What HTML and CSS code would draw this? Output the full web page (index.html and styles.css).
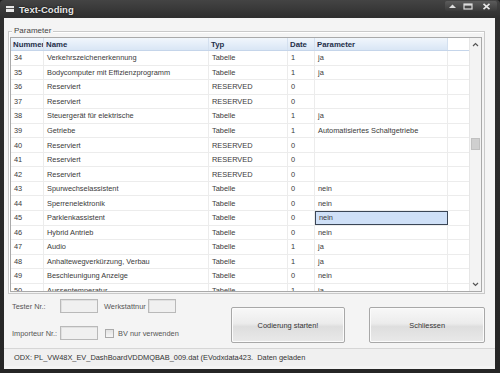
FILE: index.html
```html
<!DOCTYPE html>
<html>
<head>
<meta charset="utf-8">
<link rel="stylesheet" href="styles.css">
</head>
<body>
<div class="window">
  <div class="titlebar">
    <span class="appicon"></span>
    <span class="title">Text-Coding</span>
    <div class="controls">
      <span class="ctl min"><svg width="9" height="6" viewBox="0 0 9 6"><path d="M1 5 L4.5 1.5 L8 5 Z" fill="#ddd"/></svg></span>
      <span class="ctl max"><svg width="10" height="7" viewBox="0 0 10 7"><rect x="1" y="1" width="8" height="5" fill="none" stroke="#ddd" stroke-width="1.2"/><rect x="1" y="1" width="8" height="1.6" fill="#ddd"/></svg></span>
      <span class="ctl close"><svg width="9" height="7" viewBox="0 0 9 7"><path d="M1.5 0.8 L7.5 6.2 M7.5 0.8 L1.5 6.2" stroke="#e8e8e8" stroke-width="1.6"/></svg></span>
    </div>
  </div>
  <div class="client">
    <div class="group">
      <span class="legend">Parameter</span>
      <div class="grid">
        <div class="table">
          <div class="row head">
            <div class="c c1">Nummer</div><div class="c c2">Name</div><div class="c c3">Typ</div><div class="c c4">Date</div><div class="c c5">Parameter</div><div class="c c6"></div>
          </div>
          <div class="row"><div class="c c1">34</div><div class="c c2">Verkehrszeichenerkennung</div><div class="c c3">Tabelle</div><div class="c c4">1</div><div class="c c5">ja</div><div class="c c6"></div></div>
          <div class="row"><div class="c c1">35</div><div class="c c2">Bodycomputer mit Effizienzprogramm</div><div class="c c3">Tabelle</div><div class="c c4">1</div><div class="c c5">ja</div><div class="c c6"></div></div>
          <div class="row"><div class="c c1">36</div><div class="c c2">Reserviert</div><div class="c c3">RESERVED</div><div class="c c4">0</div><div class="c c5"></div><div class="c c6"></div></div>
          <div class="row"><div class="c c1">37</div><div class="c c2">Reserviert</div><div class="c c3">RESERVED</div><div class="c c4">0</div><div class="c c5"></div><div class="c c6"></div></div>
          <div class="row"><div class="c c1">38</div><div class="c c2">Steuergerät für elektrische</div><div class="c c3">Tabelle</div><div class="c c4">1</div><div class="c c5">ja</div><div class="c c6"></div></div>
          <div class="row"><div class="c c1">39</div><div class="c c2">Getriebe</div><div class="c c3">Tabelle</div><div class="c c4">1</div><div class="c c5">Automatisiertes Schaltgetriebe</div><div class="c c6"></div></div>
          <div class="row"><div class="c c1">40</div><div class="c c2">Reserviert</div><div class="c c3">RESERVED</div><div class="c c4">0</div><div class="c c5"></div><div class="c c6"></div></div>
          <div class="row"><div class="c c1">41</div><div class="c c2">Reserviert</div><div class="c c3">RESERVED</div><div class="c c4">0</div><div class="c c5"></div><div class="c c6"></div></div>
          <div class="row"><div class="c c1">42</div><div class="c c2">Reserviert</div><div class="c c3">RESERVED</div><div class="c c4">0</div><div class="c c5"></div><div class="c c6"></div></div>
          <div class="row"><div class="c c1">43</div><div class="c c2">Spurwechselassistent</div><div class="c c3">Tabelle</div><div class="c c4">0</div><div class="c c5">nein</div><div class="c c6"></div></div>
          <div class="row"><div class="c c1">44</div><div class="c c2">Sperrenelektronik</div><div class="c c3">Tabelle</div><div class="c c4">0</div><div class="c c5">nein</div><div class="c c6"></div></div>
          <div class="row"><div class="c c1">45</div><div class="c c2">Parklenkassistent</div><div class="c c3">Tabelle</div><div class="c c4">0</div><div class="c c5 sel">nein</div><div class="c c6"></div></div>
          <div class="row"><div class="c c1">46</div><div class="c c2">Hybrid Antrieb</div><div class="c c3">Tabelle</div><div class="c c4">0</div><div class="c c5">nein</div><div class="c c6"></div></div>
          <div class="row"><div class="c c1">47</div><div class="c c2">Audio</div><div class="c c3">Tabelle</div><div class="c c4">1</div><div class="c c5">ja</div><div class="c c6"></div></div>
          <div class="row"><div class="c c1">48</div><div class="c c2">Anhaltewegverkürzung, Verbau</div><div class="c c3">Tabelle</div><div class="c c4">1</div><div class="c c5">ja</div><div class="c c6"></div></div>
          <div class="row"><div class="c c1">49</div><div class="c c2">Beschleunigung Anzeige</div><div class="c c3">Tabelle</div><div class="c c4">0</div><div class="c c5">nein</div><div class="c c6"></div></div>
          <div class="row"><div class="c c1">50</div><div class="c c2">Aussentemperatur</div><div class="c c3">Tabelle</div><div class="c c4">1</div><div class="c c5">ja</div><div class="c c6"></div></div>
        </div>
        <div class="scrollbar">
          <span class="arrow up"><svg width="7" height="5" viewBox="0 0 7 5"><path d="M1 4 L3.5 1.5 L6 4" fill="none" stroke="#555" stroke-width="1.2"/></svg></span>
          <span class="track"><span class="thumb"></span></span>
          <span class="arrow down"><svg width="7" height="5" viewBox="0 0 7 5"><path d="M1 1 L3.5 3.5 L6 1" fill="none" stroke="#555" stroke-width="1.2"/></svg></span>
        </div>
      </div>
    </div>
    <div class="bottom">
      <div class="fields">
        <div class="frow">
          <span class="lbl l1">Tester Nr.:</span><span class="input w1"></span>
          <span class="lbl l2">Werkstattnur</span><span class="input w2"></span>
        </div>
        <div class="frow">
          <span class="lbl l1">Importeur Nr.:</span><span class="input w1"></span>
          <span class="check"></span><span class="lbl">BV nur verwenden</span>
        </div>
      </div>
      <div class="btn b1">Codierung starten!</div>
      <div class="btn b2">Schliessen</div>
    </div>
    <div class="status">ODX: PL_VW48X_EV_DashBoardVDDMQBAB_009.dat (EVodxdata423.&nbsp; Daten geladen</div>
  </div>
</div>
</body>
</html>
```

FILE: styles.css
```css
* { box-sizing: border-box; }
html, body { margin: 0; padding: 0; }
body {
  width: 500px; height: 373px; overflow: hidden;
  background: #1c1c1c;
  font-family: "Liberation Sans", Arial, sans-serif;
}
.window {
  width: 500px; height: 373px;
  display: flex; flex-direction: column;
  padding: 0 5px 4px 4px;
  background: linear-gradient(to bottom, #444 0px, #2e2e2e 18px, #262626 100%);
  border-radius: 4px 4px 0 0;
}
.titlebar {
  height: 18px; flex: none;
  display: flex; align-items: center;
  position: relative;
}
.appicon {
  width: 8px; height: 6px; margin: 0 5px 0 2px;
  background: #e8e8e8; border-top: 2px solid #e8e8e8;
  box-shadow: inset 0 1px 0 #555;
}
.title {
  color: #e6e6e6; font-weight: bold; font-size: 9.5px;
  font-family: "Liberation Sans", Arial, sans-serif;
  text-shadow: 0 0 2px #000;
}
.controls {
  position: absolute; right: -2px; top: 1px;
  display: flex; height: 10px;
  background: linear-gradient(#5c5c5c, #3a3a3a);
  border-radius: 2px;
}
.ctl { display: flex; align-items: center; justify-content: center; height: 10px; }
.ctl.min { width: 15px; }
.ctl.max { width: 15px; }
.ctl.close { width: 22px; }
.client {
  flex: 1;
  background: #f4f4f4;
  display: flex; flex-direction: column;
  padding: 13px 10px 0 4px;
}
.group {
  border: 1px solid #c9c9c9;
  box-shadow: inset 1px 1px 0 #fff;
  padding: 5px 2px 1px 1px;
  height: 263px;
  display: flex; flex-direction: column;
}
.legend {
  display: block; width: max-content;
  margin: -11px 0 0 2px; padding: 0 2px;
  background: #f4f4f4;
  font-size: 8px; line-height: 10px; color: #444;
  height: 11px;
}
.grid {
  flex: 1;
  display: flex;
  border: 1px solid #a9a9a9;
  background: #fff;
  overflow: hidden;
}
.table { flex: 1; overflow: hidden; }
.row { display: flex; height: 14.55px; border-bottom: 1px solid #ececec; }
.row.head {
  height: 13px;
  background: linear-gradient(#f1f6fc, #d9e6f5);
  border-bottom: 1px solid #c5d5ea;
}
.c {
  font-size: 7.4px; color: #3a3a3a;
  padding: 0 0 0 3px;
  display: flex; align-items: center;
  white-space: nowrap; overflow: hidden;
  border-right: 1px solid #ececec;
}
.head .c { font-weight: bold; color: #1f2f4a; font-size: 7.8px; border-right: 1px solid #d4e0ef; padding-left: 2px; }
.c1 { width: 33px; }
.c2 { width: 165px; }
.c3 { width: 79px; }
.c4 { width: 27px; }
.c5 { width: 133px; }
.c6 { flex: 1; border-right: none; }
.head .c6 { background: #fff; border-right: none; }
.c.sel {
  background: #cfe0f7;
  border: 1.5px solid #3b4656;
}
.scrollbar {
  width: 12px; flex: none;
  display: flex; flex-direction: column;
  background: #f3f3f3;
  border-left: 1px solid #e6e6e6;
}
.arrow { height: 13px; display: flex; align-items: center; justify-content: center; }
.track { flex: 1; display: block; padding-top: 87px; }
.thumb { display: block; height: 12px; margin: 0 1px; background: #cfcfcf; border: 1px solid #c0c0c0; }
.bottom {
  height: 54px; flex: none;
  display: flex; align-items: flex-start;
  padding-left: 4px;
}
.fields { width: 215px; display: flex; flex-direction: column; gap: 13px; padding-top: 5px; }
.frow { display: flex; align-items: center; height: 14px; }
.lbl { font-size: 7.4px; color: #555; white-space: nowrap; }
.l1 { width: 48px; }
.l2 { width: 44px; margin-left: 6px; }
.input {
  height: 14px; background: #f0f0f0;
  border: 1px solid #b9b9b9;
  box-shadow: inset 1px 1px 0 #e0e0e0;
}
.w1 { width: 38px; }
.w2 { width: 28px; }
.check {
  width: 9px; height: 9px; margin: 0 4px 0 7px;
  border: 1px solid #aaa; background: linear-gradient(#e2e2e2, #f6f6f6);
}
.btn {
  height: 36px; margin-top: 13px;
  display: flex; align-items: center; justify-content: center;
  font-size: 7.4px; color: #333;
  border: 1px solid #a8a8a8; border-radius: 2px;
  background: linear-gradient(#f8f8f8 0%, #ececec 45%, #dedede 55%, #e9e9e9 100%);
  box-shadow: inset 0 0 0 1px #fbfbfb;
}
.b1 { width: 117px; margin-left: 8px; }
.b2 { width: 118px; margin-left: 24px; }
.status {
  margin: 0 -10px 0 -4px;
  padding-left: 10px;
  height: 18px;
  border-top: 1px solid #d6d6d6;
  font-size: 7.4px; color: #333;
  display: flex; align-items: center;
  white-space: nowrap; overflow: hidden;
  background: #f0f0f0;
}
```
